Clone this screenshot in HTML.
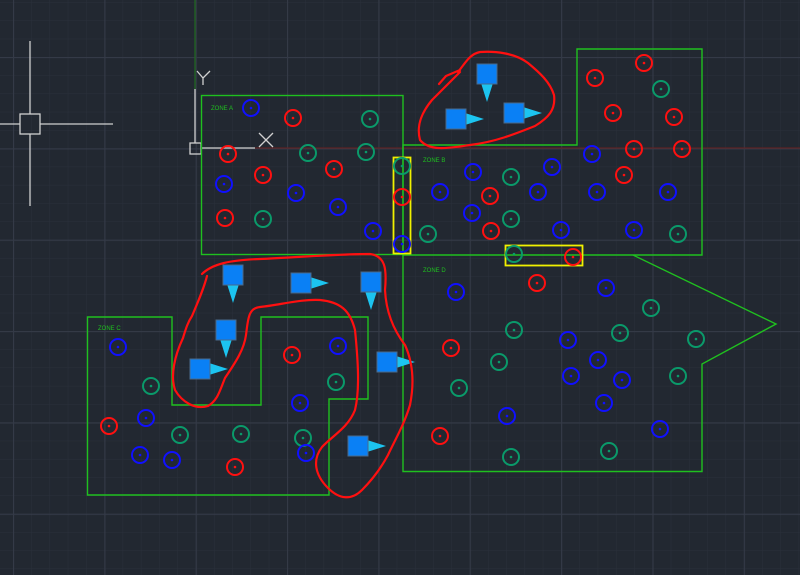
<!DOCTYPE html>
<html><head><meta charset="utf-8"><style>
html,body{margin:0;padding:0;background:#222831;width:800px;height:575px;overflow:hidden}
svg{display:block}
text{font-family:"Liberation Sans",sans-serif;font-size:6px;fill:#1fc01f}
.r{fill:none;stroke:#ff1010;stroke-width:2}
.b{fill:none;stroke:#1010ff;stroke-width:2}
.t{fill:none;stroke:#0a9a6a;stroke-width:2}
</style></head><body>
<svg width="800" height="575" viewBox="0 0 800 575" xmlns="http://www.w3.org/2000/svg">
<defs>
<pattern id="minor" width="18.27" height="18.27" patternUnits="userSpaceOnUse" x="13" y="57">
<path d="M0 0H18.27M0 0V18.27" stroke="#2a303b" stroke-width="1" fill="none"/></pattern>
<pattern id="major" width="91.35" height="91.35" patternUnits="userSpaceOnUse" x="13" y="57">
<path d="M0 0.5H91.35M0.5 0V91.35" stroke="#343a47" stroke-width="1.2" fill="none"/></pattern>
<g id="cr"><circle r="8" class="r"/><circle r="1.3" fill="#ff1010"/></g>
<g id="cb"><circle r="8" class="b"/><circle r="1.3" fill="#1010ff"/></g>
<g id="ct"><circle r="8" class="t"/><circle r="1.3" fill="#0a9a6a"/></g>
<g id="camR"><polygon points="9,-6 28,0 9,6" fill="#1cc4f0"/><rect x="-10" y="-10" width="20" height="20" fill="#0a80f5" stroke="#4a6a8a" stroke-width="1"/></g>
<g id="camD"><polygon points="-6,9 0,28 6,9" fill="#1cc4f0"/><rect x="-10" y="-10" width="20" height="20" fill="#0a80f5" stroke="#4a6a8a" stroke-width="1"/></g>
</defs>
<rect width="800" height="575" fill="#222831"/>
<rect width="800" height="575" fill="url(#minor)"/>
<rect width="800" height="575" fill="url(#major)"/>
<line x1="195" y1="0" x2="195" y2="89" stroke="#1f6a1f" stroke-width="1.2"/>
<line x1="255" y1="148" x2="800" y2="148" stroke="#6a2020" stroke-width="1"/>
<g stroke="#d0d0d0" stroke-width="1.3" fill="none">
<line x1="30" y1="41" x2="30" y2="114"/><line x1="30" y1="134" x2="30" y2="206"/>
<line x1="0" y1="124" x2="20" y2="124"/><line x1="40" y1="124" x2="113" y2="124"/>
<rect x="20" y="114" width="20" height="20"/>
<line x1="195" y1="89" x2="195" y2="143"/><line x1="201" y1="148" x2="255" y2="148"/>
<rect x="190" y="143" width="11" height="11"/>
<path d="M197 71L203 78L210 71M203 78V85"/>
<path d="M259 133L273 147M273 133L259 147"/>
</g>
<g fill="none" stroke="#1fc01f" stroke-width="1.4">
<rect x="201.5" y="95.5" width="201.5" height="159"/>
<path d="M403 145H577V49H702V255H403Z"/>
<path d="M403 255V471.5H702V364L776 324L633 255"/>
<path d="M87.5 317H172V405H261V317H368V399H329V495H87.5Z"/>
</g>
<g fill="none" stroke="#f0f000" stroke-width="1.8">
<rect x="393.5" y="157.5" width="17" height="96"/>
<rect x="505.5" y="245.5" width="77" height="20"/>
</g>
<text x="211" y="110">ZONE A</text>
<text x="423" y="162">ZONE B</text>
<text x="423" y="272">ZONE D</text>
<text x="98" y="330">ZONE C</text>
<use href="#cb" x="251" y="108"/><use href="#cr" x="293" y="118"/><use href="#ct" x="370" y="119"/>
<use href="#cr" x="228" y="154"/><use href="#ct" x="308" y="153"/><use href="#ct" x="366" y="152"/>
<use href="#cr" x="334" y="169"/><use href="#cb" x="224" y="184"/><use href="#cr" x="263" y="175"/>
<use href="#cb" x="296" y="193"/><use href="#cb" x="338" y="207"/><use href="#cr" x="225" y="218"/>
<use href="#ct" x="263" y="219"/><use href="#cb" x="373" y="231"/>
<use href="#ct" x="402" y="166"/><use href="#cr" x="402" y="197"/><use href="#cb" x="402" y="244"/>
<use href="#cr" x="644" y="63"/><use href="#cr" x="595" y="78"/><use href="#ct" x="661" y="89"/>
<use href="#cr" x="613" y="113"/><use href="#cr" x="674" y="117"/><use href="#cb" x="592" y="154"/>
<use href="#cr" x="634" y="149"/><use href="#cr" x="682" y="149"/><use href="#cr" x="624" y="175"/>
<use href="#cb" x="473" y="172"/><use href="#ct" x="511" y="177"/><use href="#cb" x="552" y="167"/>
<use href="#cb" x="440" y="192"/><use href="#cr" x="490" y="196"/><use href="#cb" x="538" y="192"/>
<use href="#cb" x="597" y="192"/><use href="#cb" x="668" y="192"/><use href="#cb" x="472" y="213"/>
<use href="#ct" x="511" y="219"/><use href="#cr" x="491" y="231"/><use href="#cb" x="561" y="230"/>
<use href="#cb" x="634" y="230"/><use href="#ct" x="428" y="234"/><use href="#ct" x="678" y="234"/>
<use href="#ct" x="514" y="254"/><use href="#cr" x="573" y="257"/>
<use href="#cr" x="537" y="283"/><use href="#cb" x="456" y="292"/><use href="#cb" x="606" y="288"/>
<use href="#ct" x="651" y="308"/><use href="#ct" x="514" y="330"/><use href="#cb" x="568" y="340"/>
<use href="#ct" x="620" y="333"/><use href="#ct" x="696" y="339"/><use href="#cr" x="451" y="348"/>
<use href="#ct" x="499" y="362"/><use href="#cb" x="598" y="360"/><use href="#cb" x="571" y="376"/>
<use href="#cb" x="622" y="380"/><use href="#ct" x="678" y="376"/><use href="#ct" x="459" y="388"/>
<use href="#cb" x="604" y="403"/><use href="#cb" x="507" y="416"/><use href="#cb" x="660" y="429"/>
<use href="#cr" x="440" y="436"/><use href="#ct" x="511" y="457"/><use href="#ct" x="609" y="451"/>
<use href="#cb" x="118" y="347"/><use href="#ct" x="151" y="386"/><use href="#cr" x="109" y="426"/>
<use href="#cb" x="146" y="418"/><use href="#ct" x="180" y="435"/><use href="#ct" x="241" y="434"/>
<use href="#cb" x="140" y="455"/><use href="#cb" x="172" y="460"/><use href="#cr" x="235" y="467"/>
<use href="#cr" x="292" y="355"/><use href="#cb" x="338" y="346"/><use href="#ct" x="336" y="382"/>
<use href="#cb" x="300" y="403"/><use href="#ct" x="303" y="438"/><use href="#cb" x="306" y="453"/>
<use href="#camD" x="487" y="74"/><use href="#camR" x="456" y="119"/><use href="#camR" x="514" y="113"/>
<use href="#camD" x="233" y="275"/><use href="#camR" x="301" y="283"/><use href="#camD" x="371" y="282"/>
<use href="#camD" x="226" y="330"/><use href="#camR" x="200" y="369"/><use href="#camR" x="387" y="362"/>
<use href="#camR" x="358" y="446"/>
<g fill="none" stroke="#ff1010" stroke-width="2.2" stroke-linecap="round" stroke-linejoin="round">
<path d="M439 84L446 76L460 70M458 72C466 62 470 54 480 52C495 51 515 53 528 63C540 73 550 82 554 95C556 110 548 118 535 126C515 134 495 142 470 145C450 148 430 152 420 140C416 125 422 112 432 100C442 90 452 80 460 72"/>
<path d="M202 274C212 264 230 260 260 259C300 257 340 254 370 254C385 256 387 268 385 290C386 310 392 328 405 345C414 365 414 385 410 405C404 425 395 440 388 455C380 470 372 480 362 490C352 500 340 500 328 488C315 475 312 460 322 447C332 436 348 428 355 410C360 390 358 360 355 330C350 310 340 302 320 300C300 299 280 305 260 307C248 308 248 320 246 335C244 350 235 363 225 378C220 390 218 400 208 406C195 410 182 402 175 390C170 375 175 355 183 338C186 328 188 322 192 316C198 302 204 288 207 276"/>
</g>
</svg>
</body></html>
